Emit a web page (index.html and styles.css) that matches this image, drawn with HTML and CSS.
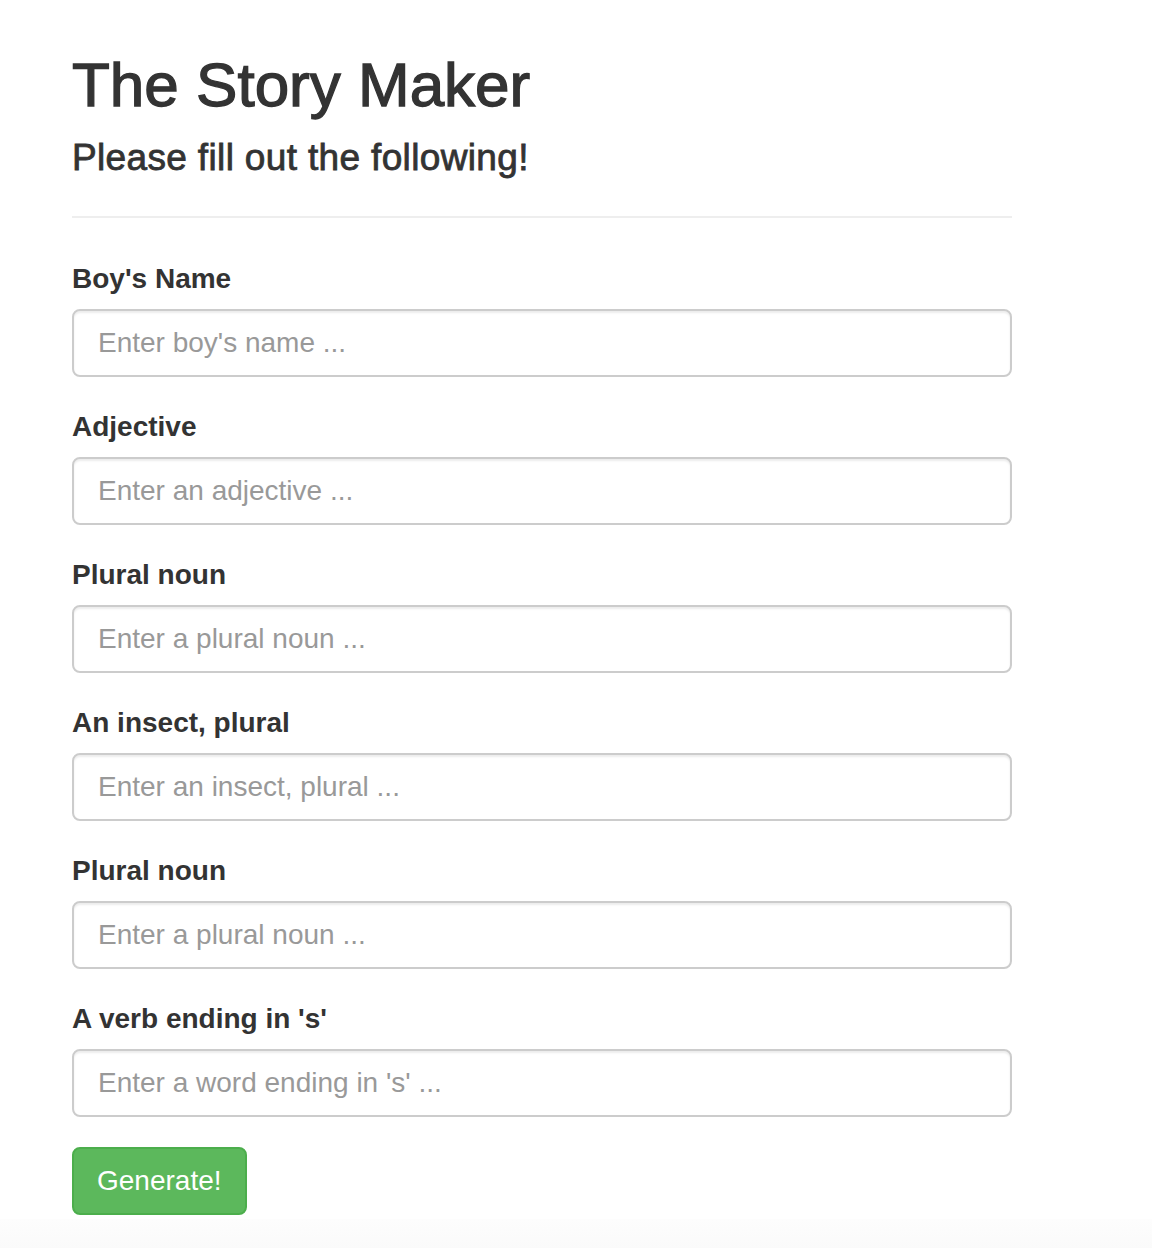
FILE: index.html
```html
<!DOCTYPE html>
<html lang="en">
<head>
<meta charset="utf-8">
<title>The Story Maker</title>
<link rel="stylesheet" href="styles.css">
</head>
<body>
<main class="page">
  <div class="container">
    <h1 class="title">The Story Maker</h1>
    <h3 class="subtitle">Please fill out the following!</h3>
    <hr class="rule">
    <form class="story-form">
      <div class="form-group">
        <label class="label" for="f1">Boy's Name</label>
        <input class="input" id="f1" type="text" placeholder="Enter boy's name ...">
      </div>
      <div class="form-group">
        <label class="label" for="f2">Adjective</label>
        <input class="input" id="f2" type="text" placeholder="Enter an adjective ...">
      </div>
      <div class="form-group">
        <label class="label" for="f3">Plural noun</label>
        <input class="input" id="f3" type="text" placeholder="Enter a plural noun ...">
      </div>
      <div class="form-group">
        <label class="label" for="f4">An insect, plural</label>
        <input class="input" id="f4" type="text" placeholder="Enter an insect, plural ...">
      </div>
      <div class="form-group">
        <label class="label" for="f5">Plural noun</label>
        <input class="input" id="f5" type="text" placeholder="Enter a plural noun ...">
      </div>
      <div class="form-group">
        <label class="label" for="f6">A verb ending in 's'</label>
        <input class="input" id="f6" type="text" placeholder="Enter a word ending in 's' ...">
      </div>
      <button class="btn-generate" type="button">Generate!</button>
    </form>
  </div>
</main>
<div class="bottom-band"></div>
</body>
</html>
```

FILE: styles.css
```css
html, body {
  margin: 0;
  padding: 0;
  background: #fff;
}

body {
  font-family: "Liberation Sans", Arial, Helvetica, sans-serif;
  color: #333;
}

.page {
  padding-left: 72px;
  padding-bottom: 4px;
}

.container {
  width: 940px;
}

.title {
  margin: 52px 0 0;
  font-size: 62px;
  line-height: 66px;
  font-weight: 400;
  color: #333;
  -webkit-text-stroke: 1.3px #333;
}

.subtitle {
  margin: 18px 0 0;
  font-size: 37px;
  line-height: 44px;
  font-weight: 400;
  letter-spacing: 0.35px;
  color: #333;
  -webkit-text-stroke: 0.8px #333;
}

.rule {
  margin: 36px 0 41px;
  border: 0;
  border-top: 2px solid #eee;
  height: 0;
}

.story-form {
  margin: 0;
}

.form-group {
  margin-bottom: 30px;
}

.label {
  display: block;
  font-size: 28px;
  line-height: 40px;
  font-weight: 700;
  margin-bottom: 10px;
  color: #333;
}

.input {
  display: block;
  box-sizing: border-box;
  width: 100%;
  height: 68px;
  padding: 0 24px;
  font-family: "Liberation Sans", Arial, Helvetica, sans-serif;
  font-size: 28px;
  color: #555;
  background: #fff;
  border: 2px solid #ccc;
  border-radius: 8px;
  box-shadow: inset 0 2px 2px rgba(0, 0, 0, 0.075);
  outline: none;
}

.input::placeholder {
  color: #999;
  opacity: 1;
}

.btn-generate {
  display: block;
  box-sizing: border-box;
  height: 68px;
  padding: 0 23px;
  font-family: "Liberation Sans", Arial, Helvetica, sans-serif;
  font-size: 28px;
  color: #fff;
  background: #5cb85c;
  border: 2px solid #4cae4c;
  border-radius: 8px;
  cursor: pointer;
}

.bottom-band {
  height: 40px;
  background: linear-gradient(#fdfdfd, #f9f9f9);
}
```
